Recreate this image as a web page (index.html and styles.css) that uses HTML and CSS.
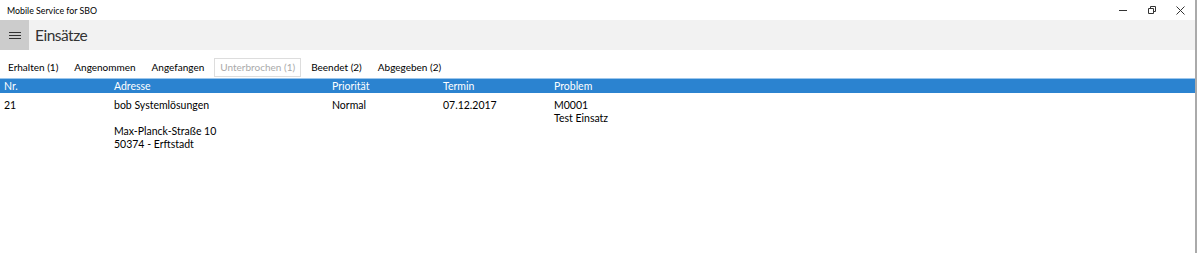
FILE: index.html
```html
<!DOCTYPE html>
<html lang="de">
<head>
    <meta charset="UTF-8">
    <title>Mobile Service for SBO</title>
    <link rel="stylesheet" href="styles.css">
</head>
<body>
    <div class="window">
        <div class="titlebar">
            <span class="app-title">Mobile Service for SBO</span>
            <div class="win-buttons">
                <span class="win-btn">
                    <svg width="8" height="8" viewBox="0 0 8 8"><path d="M0 4.5h8" stroke="#333" stroke-width="1"/></svg>
                </span>
                <span class="win-btn">
                    <svg width="8" height="8" viewBox="0 0 8 8"><path d="M0.5 2.5h5v5h-5z M2.5 2.5v-2h5v5h-2" fill="none" stroke="#333" stroke-width="1"/></svg>
                </span>
                <span class="win-btn">
                    <svg width="9" height="9" viewBox="0 0 9 9"><path d="M0.5 0.5l8 8M8.5 0.5l-8 8" stroke="#333" stroke-width="1"/></svg>
                </span>
            </div>
        </div>
        <div class="header">
            <div class="menu-button">
                <svg width="12" height="9" viewBox="0 0 12 9"><path d="M0 1.5h12M0 4.5h12M0 7.5h12" stroke="#333" stroke-width="1"/></svg>
            </div>
            <h1>Einsätze</h1>
        </div>
        <div class="tabs">
            <span class="tab">Erhalten (1)</span>
            <span class="tab">Angenommen</span>
            <span class="tab">Angefangen</span>
            <span class="tab disabled">Unterbrochen (1)</span>
            <span class="tab">Beendet (2)</span>
            <span class="tab">Abgegeben (2)</span>
        </div>
        <table class="jobs">
            <tr>
                <th class="col-nr">Nr.</th>
                <th class="col-address">Adresse</th>
                <th class="col-prio">Priorität</th>
                <th class="col-date">Termin</th>
                <th>Problem</th>
            </tr>
            <tr>
                <td>21</td>
                <td>bob Systemlösungen<br><br>Max-Planck-Straße 10<br>50374 - Erftstadt</td>
                <td>Normal</td>
                <td>07.12.2017</td>
                <td>M0001<br>Test Einsatz</td>
            </tr>
        </table>
    </div>
</body>
</html>
```

FILE: styles.css
```css
body {
    margin: 0;
    padding: 0;
    background-color: #fff;
    font-family: Lato, "Open Sans", sans-serif;
    color: #000;
}
.window {
    height: 253px;
    border-right: 2px solid #aaa;
    box-sizing: border-box;
    overflow: hidden;
}
.titlebar {
    height: 20px;
    display: flex;
    align-items: center;
    justify-content: space-between;
}
.app-title {
    font-size: 8.8px;
    padding-left: 7px;
}
.win-buttons {
    display: flex;
}
.win-btn {
    width: 29px;
    display: flex;
    justify-content: center;
}
.header {
    height: 30px;
    background-color: #f2f2f2;
    display: flex;
    align-items: center;
}
.menu-button {
    width: 29px;
    height: 30px;
    background-color: #cccccc;
    display: flex;
    align-items: center;
    justify-content: center;
}
h1 {
    margin: 0 0 0 6px;
    font-size: 15.5px;
    font-weight: normal;
    letter-spacing: -0.5px;
    color: #333;
}
.tabs {
    display: flex;
    align-items: center;
    padding: 8px 0 1px 2px;
    font-size: 10px;
    line-height: 13px;
}
.tab {
    padding: 2px 5px;
    margin-right: 4px;
    border: 1px solid transparent;
}
.tab.disabled {
    color: #aaa;
    border-color: #ddd;
}
.jobs {
    width: 100%;
    border-collapse: collapse;
    font-size: 10.5px;
}
.jobs th {
    background-color: #2b83d0;
    color: #fff;
    font-weight: normal;
    text-align: left;
    padding: 0 0 0 4px;
    height: 14px;
    border-top: 1px solid #9cc6ec;
}
.jobs td {
    vertical-align: top;
    padding: 6px 0 0 4px;
    line-height: 13px;
}
.col-nr { width: 106px; }
.col-address { width: 214px; }
.col-prio { width: 107px; }
.col-date { width: 107px; }
```
